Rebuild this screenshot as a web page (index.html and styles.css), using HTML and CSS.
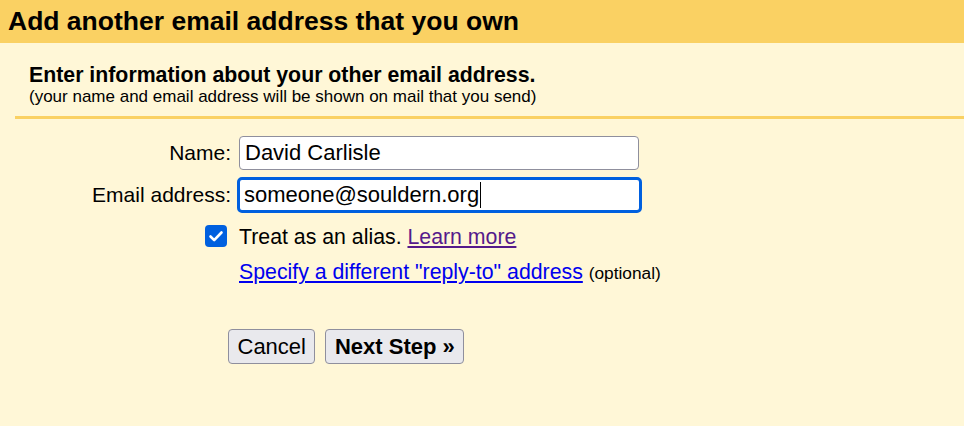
FILE: index.html
```html
<!DOCTYPE html>
<html>
<head>
<meta charset="utf-8">
<link rel="stylesheet" href="styles.css">
</head>
<body>
<div class="page">
  <div class="header">Add another email address that you own</div>
  <div class="intro">
    <div class="intro-title">Enter information about your other email address.</div>
    <div class="intro-sub">(your name and email address will be shown on mail that you send)</div>
  </div>
  <div class="divider"></div>
  <div class="form">
    <div class="row">
      <label class="label">Name:</label>
      <div class="field">David Carlisle</div>
    </div>
    <div class="row email-row">
      <label class="label">Email address:</label>
      <div class="field focused">someone@souldern.org<span class="caret"></span></div>
    </div>
    <div class="row check-row">
      <div class="label check-cell">
        <span class="checkbox">
          <svg width="22" height="22" viewBox="0 0 22 22"><path d="M5.5 11.5 L9.2 15.2 L16.5 7.5" fill="none" stroke="#fff" stroke-width="2.6" stroke-linecap="round" stroke-linejoin="round"/></svg>
        </span>
      </div>
      <div class="text">Treat as an alias. <a class="visited" href="#">Learn more</a></div>
    </div>
    <div class="row reply-row">
      <div class="label"></div>
      <div class="text"><a class="link" href="#">Specify a different "reply-to" address</a> <span class="optional">(optional)</span></div>
    </div>
    <div class="row buttons">
      <div class="label"></div>
      <div class="btns">
        <button class="btn">Cancel</button>
        <button class="btn bold">Next Step »</button>
      </div>
    </div>
  </div>
</div>
</body>
</html>
```

FILE: styles.css
```css
html, body {
  margin: 0;
  padding: 0;
  background: #fff7d7;
  font-family: "Liberation Sans", Arial, sans-serif;
  color: #000;
}
.page {
  width: 964px;
  height: 426px;
  overflow: hidden;
}
.header {
  background: #fad163;
  height: 43px;
  box-sizing: border-box;
  padding: 6px 0 0 8px;
  font-size: 26.5px;
  font-weight: bold;
  line-height: 30px;
  white-space: nowrap;
}
.intro {
  padding: 20px 0 0 29px;
}
.intro-title {
  font-size: 21.3px;
  font-weight: bold;
  line-height: 24px;
  white-space: nowrap;
}
.intro-sub {
  font-size: 17px;
  line-height: 20px;
  white-space: nowrap;
}
.divider {
  margin: 9px 0 0 15px;
  height: 3px;
  background: #fad163;
}
.form {
  padding-top: 17px;
}
.row {
  display: flex;
  align-items: center;
}
.label {
  width: 239px;
  box-sizing: border-box;
  padding-right: 8px;
  text-align: right;
  font-size: 21px;
  flex-shrink: 0;
  white-space: nowrap;
}
.field {
  width: 400px;
  height: 34px;
  box-sizing: border-box;
  border: 1px solid #8f8f9d;
  border-radius: 4px;
  background: #fff;
  font-size: 22px;
  line-height: 32px;
  padding-left: 5px;
  display: flex;
  align-items: center;
  white-space: nowrap;
}
.email-row {
  margin-top: 7px;
}
.field.focused {
  border: 3px solid #0060df;
  border-radius: 5px;
  width: 405px;
  height: 36px;
  margin-left: -2px;
  padding-left: 4px;
}
.caret {
  display: inline-block;
  width: 1px;
  height: 26px;
  background: #000;
  margin-left: 1px;
}
.check-row {
  margin-top: 12px;
  align-items: flex-start;
}
.check-cell {
  display: flex;
  justify-content: flex-end;
  padding-right: 12px;
}
.checkbox {
  width: 22px;
  height: 22px;
  border-radius: 4px;
  background: #0060df;
  display: block;
}
.checkbox svg {
  display: block;
}
.text {
  font-size: 21.3px;
  line-height: 24px;
  white-space: nowrap;
}
.reply-row {
  margin-top: 11px;
}
.visited {
  color: #551a8b;
}
.link {
  color: #0000ee;
}
.optional {
  font-size: 17.3px;
}
.buttons {
  margin-top: 44px;
}
.btns {
  display: flex;
  gap: 10px;
  margin-left: -11px;
}
.btn {
  font-family: "Liberation Sans", Arial, sans-serif;
  font-size: 22px;
  height: 35px;
  padding: 0 8.5px;
  background: #e9e9ed;
  border: 1px solid #8f8f9d;
  border-radius: 4px;
  color: #000;
}
.btn.bold {
  font-weight: bold;
}
```
